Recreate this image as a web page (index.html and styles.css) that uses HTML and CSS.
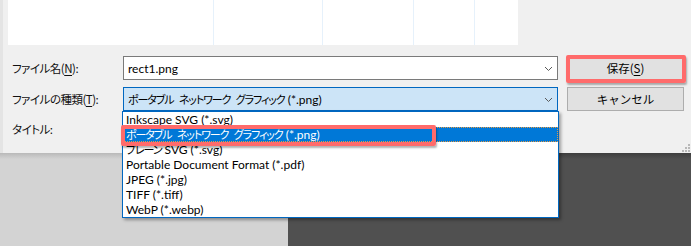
FILE: index.html
```html
<!DOCTYPE html>
<html lang="ja">
  <head>
    <meta charset="UTF-8" />
    <title>名前を付けて保存</title>
    <link rel="stylesheet" href="styles.css">
  </head>
  <body>
    <div class="dialog">
      <div class="preview">
        <span class="col-line" style="left: 205px"></span>
        <span class="col-line" style="left: 314px"></span>
        <span class="col-line" style="left: 405px"></span>
        <span class="col-line" style="left: 466px"></span>
      </div>

      <div class="form">
        <label class="form-label">ファイル名(<u>N</u>):</label>
        <div class="combo">
          <span class="combo-text">rect1.png</span>
          <svg class="chevron" width="9" height="6" viewBox="0 0 9 6"><path d="M1 1 L4.5 4.5 L8 1" fill="none" stroke="#5a5a5a" stroke-width="1"/></svg>
        </div>
        <button class="button">保存(<u>S</u>)</button>

        <label class="form-label">ファイルの種類(<u>T</u>):</label>
        <div class="combo combo-open">
          <span class="combo-text"><span class="ja">ポータブル ネットワーク グラフィック</span> (*.png)</span>
          <svg class="chevron" width="9" height="6" viewBox="0 0 9 6"><path d="M1 1 L4.5 4.5 L8 1" fill="none" stroke="#5a5a5a" stroke-width="1"/></svg>
        </div>
        <button class="button">キャンセル</button>

        <label class="form-label title-label">タイトル:</label>
      </div>

      <svg class="grip" width="9" height="9" viewBox="0 0 9 9" fill="#b8b8b8">
        <rect x="7" y="1" width="2" height="2"/>
        <rect x="4" y="4" width="2" height="2"/><rect x="7" y="4" width="2" height="2"/>
        <rect x="1" y="7" width="2" height="2"/><rect x="4" y="7" width="2" height="2"/><rect x="7" y="7" width="2" height="2"/>
      </svg>

      <ul class="dropdown">
        <li>Inkscape SVG (*.svg)</li>
        <li class="selected"><span class="ja">ポータブル ネットワーク グラフィック</span> (*.png)</li>
        <li><span class="ja">プレーン</span> SVG (*.svg)</li>
        <li>Portable Document Format (*.pdf)</li>
        <li>JPEG (*.jpg)</li>
        <li>TIFF (*.tiff)</li>
        <li>WebP (*.webp)</li>
      </ul>

      <div class="mark mark-save"></div>
      <div class="mark mark-type"></div>
    </div>

    <div class="backdrop">
      <div class="backdrop-left"></div>
      <div class="backdrop-right"></div>
    </div>
  </body>
</html>
```

FILE: styles.css
```css
body {
  margin: 0;
  padding: 0;
  width: 691px;
  height: 246px;
  overflow: hidden;
  font-family: Lato, "Noto Sans CJK JP", sans-serif;
  font-size: 12px;
  font-feature-settings: "palt";
  color: #000;
}
.ja {
  font-family: "Noto Sans CJK JP", sans-serif;
  font-size: 11px;
  letter-spacing: -1.1px;
  word-spacing: 4px;
}
.dialog {
  position: relative;
  height: 153px;
  background-color: #f0f0f0;
  border-left: 3px solid #e4e4e4;
  box-sizing: border-box;
}
.preview {
  position: relative;
  margin-left: 5px;
  width: 510px;
  height: 45px;
  background-color: #fff;
}
.col-line {
  position: absolute;
  top: 0;
  bottom: 0;
  width: 1px;
  background-color: #e6f1fb;
}
.form {
  display: grid;
  grid-template-columns: 111px 435px 126px;
  grid-template-rows: 24px 24px 24px;
  row-gap: 7px;
  padding: 11px 0 0 9px;
  align-items: center;
}
.form-label {
  font-family: "Noto Sans CJK JP", sans-serif;
  font-size: 11.5px;
  letter-spacing: -0.5px;
  line-height: 16px;
  white-space: nowrap;
  color: #111;
}
.form-label u, .button u {
  text-decoration-thickness: 1px;
  text-underline-offset: 2px;
}
.title-label {
  align-self: start;
  padding-top: 3px;
}
.combo {
  display: flex;
  align-items: center;
  height: 24px;
  box-sizing: border-box;
  border: 1px solid #7a7a7a;
  background-color: #fff;
  padding: 0 4px 0 4px;
}
.combo-text {
  flex: 1;
  white-space: nowrap;
}
.combo-open {
  border-color: #0067c0;
  background-color: #cce4f7;
}
.chevron {
  margin-top: 1px;
}
.button {
  margin-left: 9px;
  width: 117px;
  height: 24px;
  font-family: "Noto Sans CJK JP", sans-serif;
  font-size: 11.5px;
  color: #000;
  background-color: #e1e1e1;
  border: 1px solid #adadad;
  padding: 0;
}
.grip {
  position: absolute;
  right: 1px;
  bottom: 1px;
}
.dropdown {
  position: absolute;
  left: 119px;
  top: 111px;
  width: 435px;
  margin: 0;
  padding: 0;
  list-style: none;
  background-color: #fff;
  border: 1px solid #0067c0;
  box-shadow: 2px 2px 3px rgba(0, 0, 0, 0.35);
}
.dropdown li {
  height: 15px;
  line-height: 15px;
  padding-left: 3px;
  white-space: nowrap;
  overflow: hidden;
}
.dropdown .selected {
  background-color: #0078d7;
  color: #fff;
  outline: 1px dotted #e39a45;
  outline-offset: -1px;
}
.mark {
  position: absolute;
  border: 4px solid #ff6b6b;
  border-radius: 2px;
  box-shadow: 1px 2px 2px rgba(0, 0, 0, 0.3);
}
.mark-save {
  left: 563px;
  top: 55px;
  width: 112px;
  height: 20px;
}
.mark-type {
  left: 118px;
  top: 125px;
  width: 307px;
  height: 13px;
}
.backdrop {
  display: flex;
  height: 93px;
}
.backdrop-left {
  width: 288px;
  background: linear-gradient(#b9b9b9, #d3d3d3 6px);
}
.backdrop-right {
  flex: 1;
  background: linear-gradient(#3e3e3e, #505050 6px);
}
```
